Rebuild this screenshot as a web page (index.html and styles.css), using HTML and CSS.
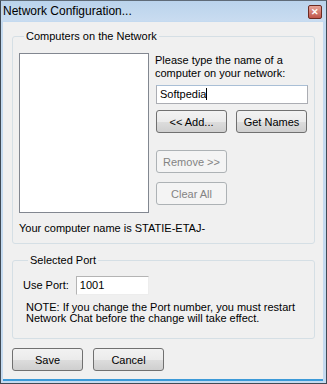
FILE: index.html
```html
<!doctype html>
<html lang="en">
	<head>
		<meta charset="UTF-8">
		<title>Network Configuration...</title>
		<link rel="stylesheet" href="styles.css">
	</head>

	<body>
		<div class="window">
			<div class="titlebar">
				<span class="title">Network Configuration...</span>
				<span class="close">&#x2715;</span>
			</div>

			<div class="content">
				<fieldset class="group network">
					<legend>Computers on the Network</legend>
					<div class="network-row">
						<div class="listbox"></div>
						<div class="side">
							<p class="prompt">Please type the name of a computer on your network:</p>
							<div class="textbox wide">Softpedia<span class="caret"></span></div>
							<div class="btn-row">
								<button class="btn">&lt;&lt; Add...</button>
								<button class="btn">Get Names</button>
							</div>
							<button class="btn disabled remove">Remove &gt;&gt;</button>
							<button class="btn disabled clear">Clear All</button>
						</div>
					</div>
					<p class="computer-name">Your computer name is STATIE-ETAJ-</p>
				</fieldset>

				<fieldset class="group port">
					<legend>Selected Port</legend>
					<div class="port-row">
						<span>Use Port:</span>
						<div class="textbox short">1001</div>
					</div>
					<p class="note">NOTE: If you change the Port number, you must restart Network Chat before the change will take effect.</p>
				</fieldset>

				<div class="actions">
					<button class="btn">Save</button>
					<button class="btn">Cancel</button>
				</div>
			</div>
		</div>
	</body>
</html>
```

FILE: styles.css
```css
* {
	padding: 0;
	margin: 0;
	box-sizing: border-box;
}
body {
	background-color: #fff;
	font-family: "Liberation Sans", Arial, sans-serif;
	font-size: 11px;
	line-height: 13px;
	color: #000;
}
.window {
	width: 327px;
	height: 384px;
	display: flex;
	flex-direction: column;
	border: 1px solid #404a55;
	border-top-color: #5f6b78;
	background-color: #c4daf0;
}
.titlebar {
	height: 20px;
	display: flex;
	align-items: center;
	justify-content: space-between;
	padding: 0 4px 0 2px;
	background: linear-gradient(#bad3ec, #c9dcf0);
}
.title {
	font-size: 12px;
	color: #000;
}
.close {
	width: 14px;
	height: 14px;
	border: 1px solid #6c2a22;
	border-radius: 2px;
	background: linear-gradient(#e6a59a, #c0554a);
	color: #fff;
	font-size: 9px;
	font-weight: bold;
	line-height: 12px;
	text-align: center;
	margin-top: 2px;
}
.content {
	flex: 1;
	margin: 1px 3px 2px 2px;
	background-color: #f0f0f0;
	border-bottom: 2px solid #3c9ad8;
	padding: 8px 8px 0 9px;
	display: flex;
	flex-direction: column;
}
.group {
	border: 1px solid #d5dfe5;
	border-radius: 3px;
	padding: 0 6px 0 6px;
}
.group legend {
	padding: 0 2px;
	margin-left: 5px;
	font-size: 11px;
}
.network-row {
	display: flex;
	gap: 6px;
	margin-top: 10px;
}
.listbox {
	width: 130px;
	height: 160px;
	background-color: #fff;
	border: 1px solid #828790;
}
.side {
	display: flex;
	flex-direction: column;
	align-items: flex-start;
	width: 153px;
}
.prompt {
	margin-top: 1px;
	width: 140px;
}
.textbox {
	background-color: #fff;
	border: 1px solid #abadb3;
	border-top-color: #a9bfd6;
	height: 19px;
	padding: 2px 3px;
	font-size: 11px;
	line-height: 13px;
}
.textbox.wide {
	width: 152px;
	margin-top: 5px;
	margin-left: 1px;
}
.caret {
	display: inline-block;
	width: 1px;
	height: 12px;
	background-color: #000;
	vertical-align: -2px;
}
.btn-row {
	display: flex;
	gap: 9px;
	margin-top: 6px;
	margin-left: 1px;
}
.btn {
	width: 71px;
	height: 23px;
	border: 1px solid #707070;
	border-radius: 3px;
	background: linear-gradient(#f2f2f2 0%, #ebebeb 50%, #dddddd 51%, #cfcfcf 100%);
	font-family: "Liberation Sans", Arial, sans-serif;
	font-size: 11px;
	color: #000;
}
.btn.disabled {
	border-color: #adb2b5;
	background: #f4f4f4;
	color: #838383;
	margin-left: 1px;
}
.btn.remove {
	margin-top: 17px;
}
.btn.clear {
	margin-top: 9px;
}
.computer-name {
	margin: 9px 0 8px 0;
}
.port {
	margin-top: 10px;
	padding-left: 10px;
}
.port-row {
	display: flex;
	align-items: center;
	gap: 7px;
	margin-top: 9px;
}
.textbox.short {
	width: 73px;
	border-color: #dadada #ededed #ededed #dadada;
	border-top-color: #b4b4b4;
	border-left-color: #b4b4b4;
}
.note {
	margin: 7px 0 14px 3px;
	line-height: 11px;
}
.actions {
	display: flex;
	gap: 10px;
	margin-top: 9px;
}
```
